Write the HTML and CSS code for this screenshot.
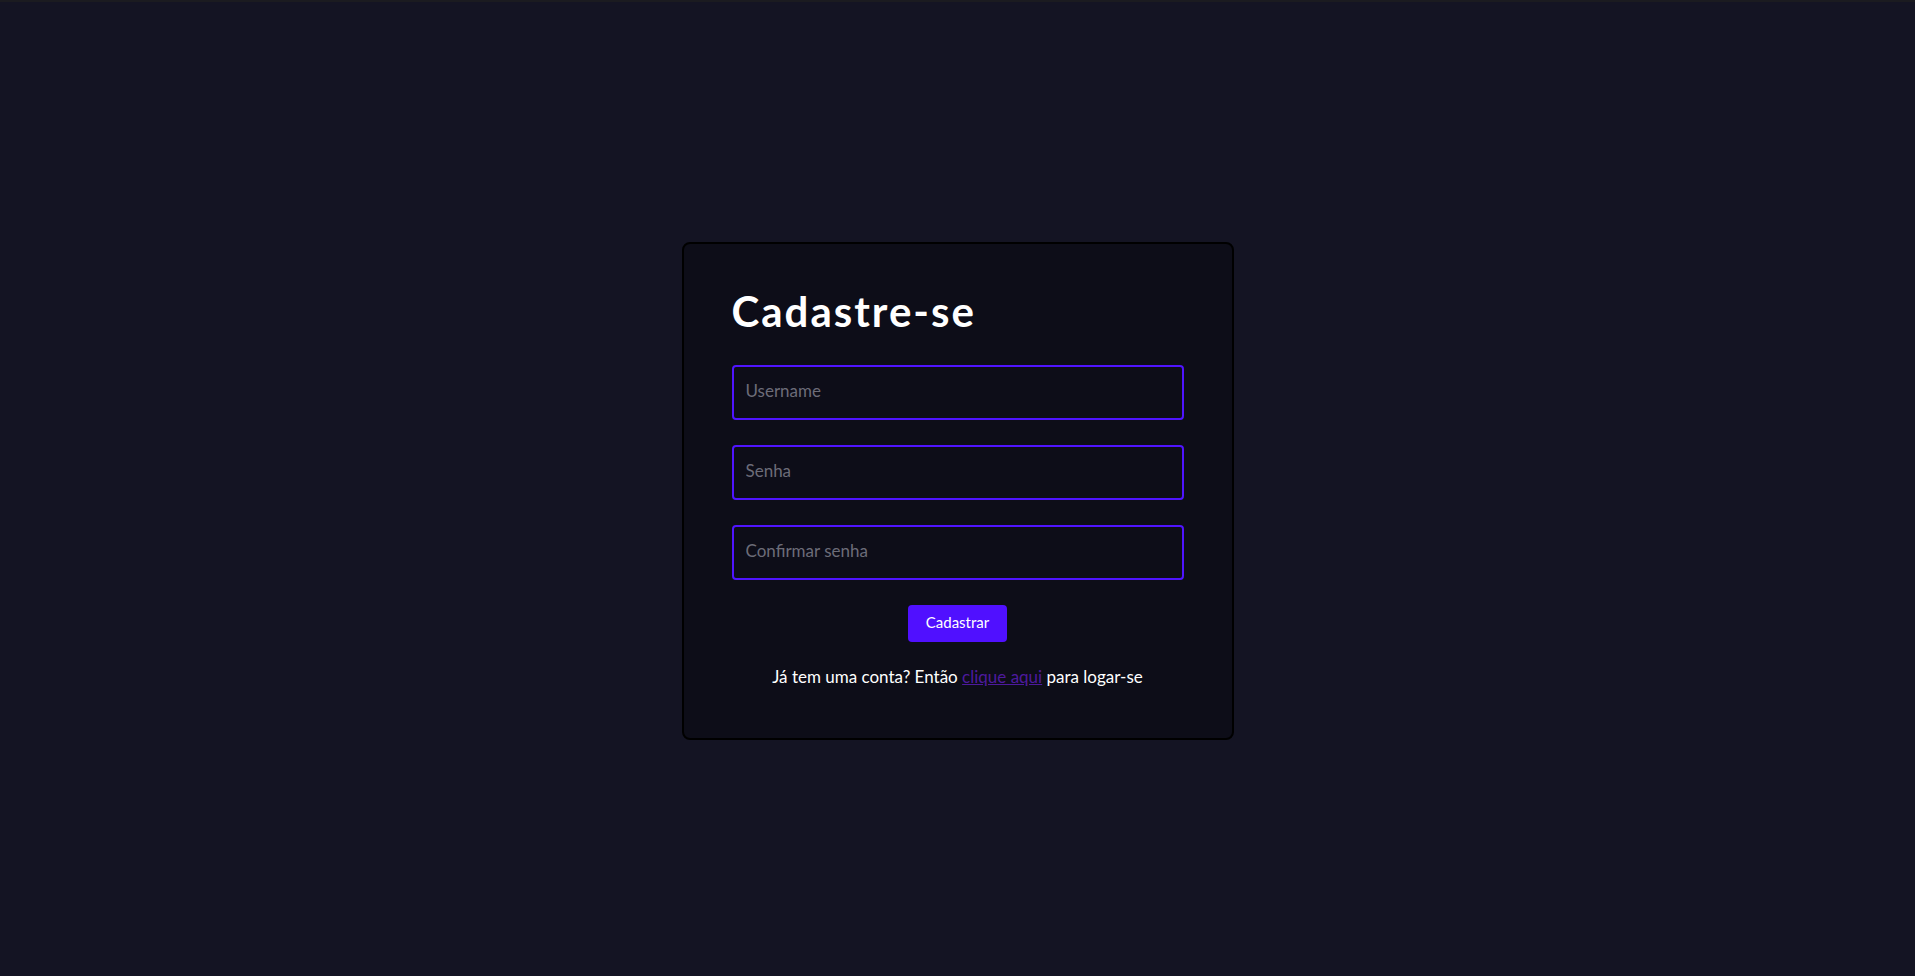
FILE: index.html
```html
<!DOCTYPE html>
<html lang="pt-BR">
<head>
<meta charset="utf-8">
<title>Cadastre-se</title>
<link rel="stylesheet" href="styles.css">
</head>
<body>
<div class="topbar"></div>
<main class="page">
  <form class="card">
    <h1 class="title">Cadastre-se</h1>
    <div class="fields">
      <input class="field" type="text" placeholder="Username">
      <input class="field" type="password" placeholder="Senha">
      <input class="field" type="password" placeholder="Confirmar senha">
    </div>
    <button class="btn" type="button">Cadastrar</button>
    <p class="note">Já tem uma conta? Então <a class="link" href="#">clique aqui</a> para logar-se</p>
  </form>
</main>
</body>
</html>
```
FILE: styles.css
```css
* { box-sizing: border-box; }
html, body { margin: 0; padding: 0; }
body {
  background: #141423;
  font-family: Lato, "Open Sans", sans-serif;
  color: #ffffff;
}
.topbar {
  height: 2px;
  background: #1b1b20;
}
.page {
  min-height: calc(100vh - 2px);
  padding-top: 3px;
  display: flex;
  align-items: center;
  justify-content: center;
}
.card {
  width: 552px;
  background: #0d0d18;
  border: 2px solid #000000;
  border-radius: 8px;
  padding: 43px 48px 51px;
  display: flex;
  flex-direction: column;
  align-items: stretch;
}
.title {
  margin: 0 0 30px;
  font-size: 42px;
  font-weight: 700;
  letter-spacing: 2px;
  line-height: 48px;
  color: #ffffff;
}
.fields {
  display: flex;
  flex-direction: column;
  gap: 25px;
}
.field {
  height: 55px;
  width: 100%;
  background: #0d0d18;
  border: 2px solid #4f14ff;
  border-radius: 4px;
  padding: 0 12px 4px;
  font-family: inherit;
  font-size: 17px;
  color: #ffffff;
  outline: none;
}
.field::placeholder { color: #6c6c78; }
.btn {
  align-self: center;
  margin-top: 25px;
  width: 99px;
  height: 37px;
  border: none;
  border-radius: 4px;
  padding: 0 0 3px;
  background: #5010ff;
  color: #ffffff;
  font-family: inherit;
  font-size: 15px;
  cursor: pointer;
}
.note {
  margin: 25px 0 0;
  text-align: center;
  font-size: 17px;
  line-height: 20px;
  color: #ffffff;
}
.link { color: #4d1a9e; text-decoration: underline; }
```
